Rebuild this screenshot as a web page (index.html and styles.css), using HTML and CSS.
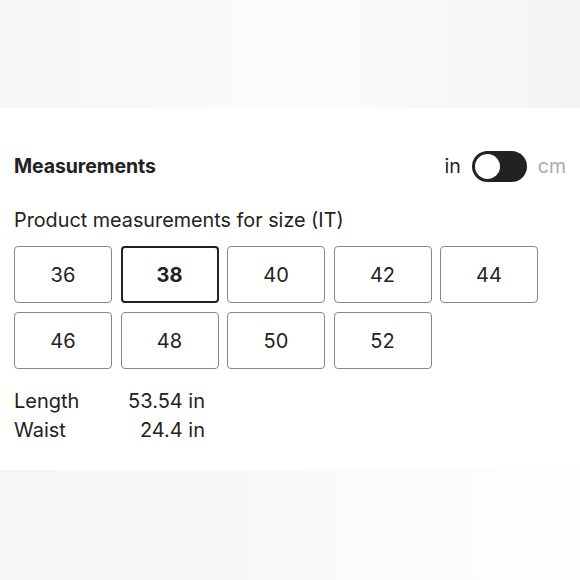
FILE: index.html
```html
<!DOCTYPE html>
<html lang="en">
<head>
    <meta charset="UTF-8">
    <meta name="viewport" content="width=device-width, initial-scale=1.0">
    <title>Measurements</title>
    <link rel="stylesheet" href="styles.css">
</head>
<body>

    <div class="band band-top"></div>

    <!-- Measurements panel -->
    <div class="panel">
        <div class="panel-header">
            <h2>Measurements</h2>
            <div class="unit-switch">
                <span class="unit active">in</span>
                <span class="toggle"><span class="knob"></span></span>
                <span class="unit">cm</span>
            </div>
        </div>

        <p class="subtitle">Product measurements for size (IT)</p>

        <div class="sizes">
            <button class="size">36</button>
            <button class="size selected">38</button>
            <button class="size">40</button>
            <button class="size">42</button>
            <button class="size">44</button>
            <button class="size">46</button>
            <button class="size">48</button>
            <button class="size">50</button>
            <button class="size">52</button>
        </div>

        <div class="values">
            <span>Length</span><span class="num">53.54 in</span>
            <span>Waist</span><span class="num">24.4 in</span>
        </div>
    </div>

    <div class="band band-bottom"></div>

</body>
</html>
```

FILE: styles.css
```css
body {
    font-family: Inter, "Noto Sans", sans-serif;
    color: #222;
    background: #fff;
    margin: 0;
    padding: 0;
}
.band {
    background: linear-gradient(90deg, #f6f6f6 0%, #fafafa 35%, #fcfcfc 55%, #f7f7f7 80%, #f4f4f4 100%);
}
.band-top {
    height: 108px;
}
.band-bottom {
    height: 110px;
    background: linear-gradient(90deg, #f6f6f6 0%, #f7f7f7 40%, #fbfbfb 60%, #fdfdfd 100%);
}
.panel {
    padding: 42px 14px 0;
    height: 362px;
    box-sizing: border-box;
}
.panel-header {
    display: flex;
    align-items: center;
    justify-content: space-between;
    height: 32px;
}
h2 {
    margin: 0;
    font-size: 19.5px;
    font-weight: 700;
    letter-spacing: -0.1px;
}
.unit-switch {
    display: flex;
    align-items: center;
    gap: 11px;
    margin-right: 0;
}
.unit {
    font-size: 19.5px;
    color: #aaa;
}
.unit.active {
    color: #222;
}
.toggle {
    width: 55px;
    height: 31px;
    border-radius: 16px;
    background: #222;
    display: flex;
    align-items: center;
    padding: 0 3px;
    box-sizing: border-box;
}
.knob {
    width: 25px;
    height: 25px;
    border-radius: 50%;
    background: #fff;
}
.subtitle {
    margin: 26px 0 0;
    font-size: 19.8px;
    line-height: 24px;
}
.sizes {
    display: grid;
    grid-template-columns: repeat(5, 98px);
    grid-auto-rows: 57px;
    column-gap: 8.5px;
    row-gap: 9px;
    margin-top: 14px;
}
.size {
    font-family: inherit;
    font-size: 20px;
    color: #222;
    background: #fff;
    border: 1px solid #888;
    border-radius: 4px;
    cursor: pointer;
}
.size.selected {
    border: 2px solid #222;
    font-weight: 700;
}
.values {
    display: grid;
    grid-template-columns: 100px 91px;
    grid-auto-rows: 29px;
    margin-top: 20px;
    font-size: 20px;
}
.values .num {
    text-align: right;
}
```
